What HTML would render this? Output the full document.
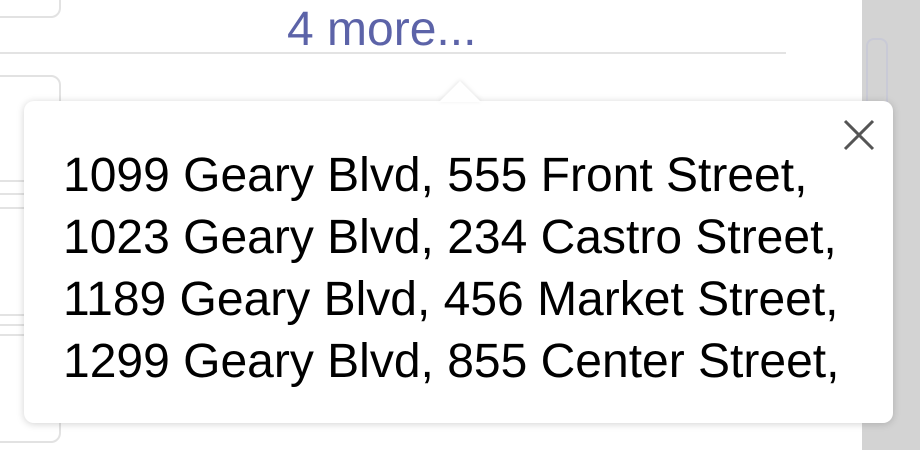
<!DOCTYPE html>
<html><head><style>
*{margin:0;padding:0;box-sizing:border-box}
body{width:920px;height:450px;overflow:hidden;background:#fff;position:relative;font-family:"Liberation Sans",Helvetica,Arial,sans-serif}
.abs{position:absolute}
.gray{left:862px;top:0;width:58px;height:450px;background:#d3d3d3}
.box{border:2px solid #e2e2e2;border-radius:10px}
.hl{height:2px;background:#e3e3e3}
.more{left:287px;top:2px;font-size:48px;color:#5c63a8;line-height:56px;white-space:nowrap}
.pop{left:24px;top:101px;width:869px;height:322px;background:#fff;border-radius:10px;box-shadow:0 1px 8px rgba(0,0,0,0.18)}
.arrow{left:439px;top:81px;width:0;height:0;border-left:21px solid transparent;border-right:21px solid transparent;border-bottom:21px solid #fff;filter:drop-shadow(0 -1px 2px rgba(0,0,0,0.1))}
.txt{left:63px;top:145px;font-size:48px;line-height:62px;color:#000;white-space:nowrap}
</style></head><body>
<div class="abs gray"></div>
<div class="abs box" style="left:866px;top:38px;width:22px;height:80px;border-color:#c9cad6;border-radius:8px"></div>
<div class="abs box" style="left:-20px;top:-30px;width:81px;height:48px"></div>
<div class="abs hl" style="left:0;top:52px;width:786px"></div>
<div class="abs box" style="left:-20px;top:75px;width:81px;height:368px"></div>
<div class="abs hl" style="left:0;top:180px;width:30px"></div>
<div class="abs hl" style="left:0;top:193px;width:30px"></div>
<div class="abs hl" style="left:0;top:207px;width:30px"></div>
<div class="abs hl" style="left:0;top:314px;width:30px"></div>
<div class="abs hl" style="left:0;top:324px;width:30px"></div>
<div class="abs hl" style="left:0;top:334px;width:30px"></div>
<div class="abs more">4 more...</div>
<div class="abs pop"></div>
<div class="abs arrow"></div>
<svg class="abs" style="left:843px;top:119px" width="32" height="32" viewBox="0 0 32 32"><path d="M2 2L30 30M30 2L2 30" stroke="#555" stroke-width="3"/></svg>
<div class="abs txt">1099 Geary Blvd, 555 Front Street,<br>1023 Geary Blvd, 234 Castro Street,<br>1189 Geary Blvd, 456 Market Street,<br>1299 Geary Blvd, 855 Center Street,</div>
</body></html>
